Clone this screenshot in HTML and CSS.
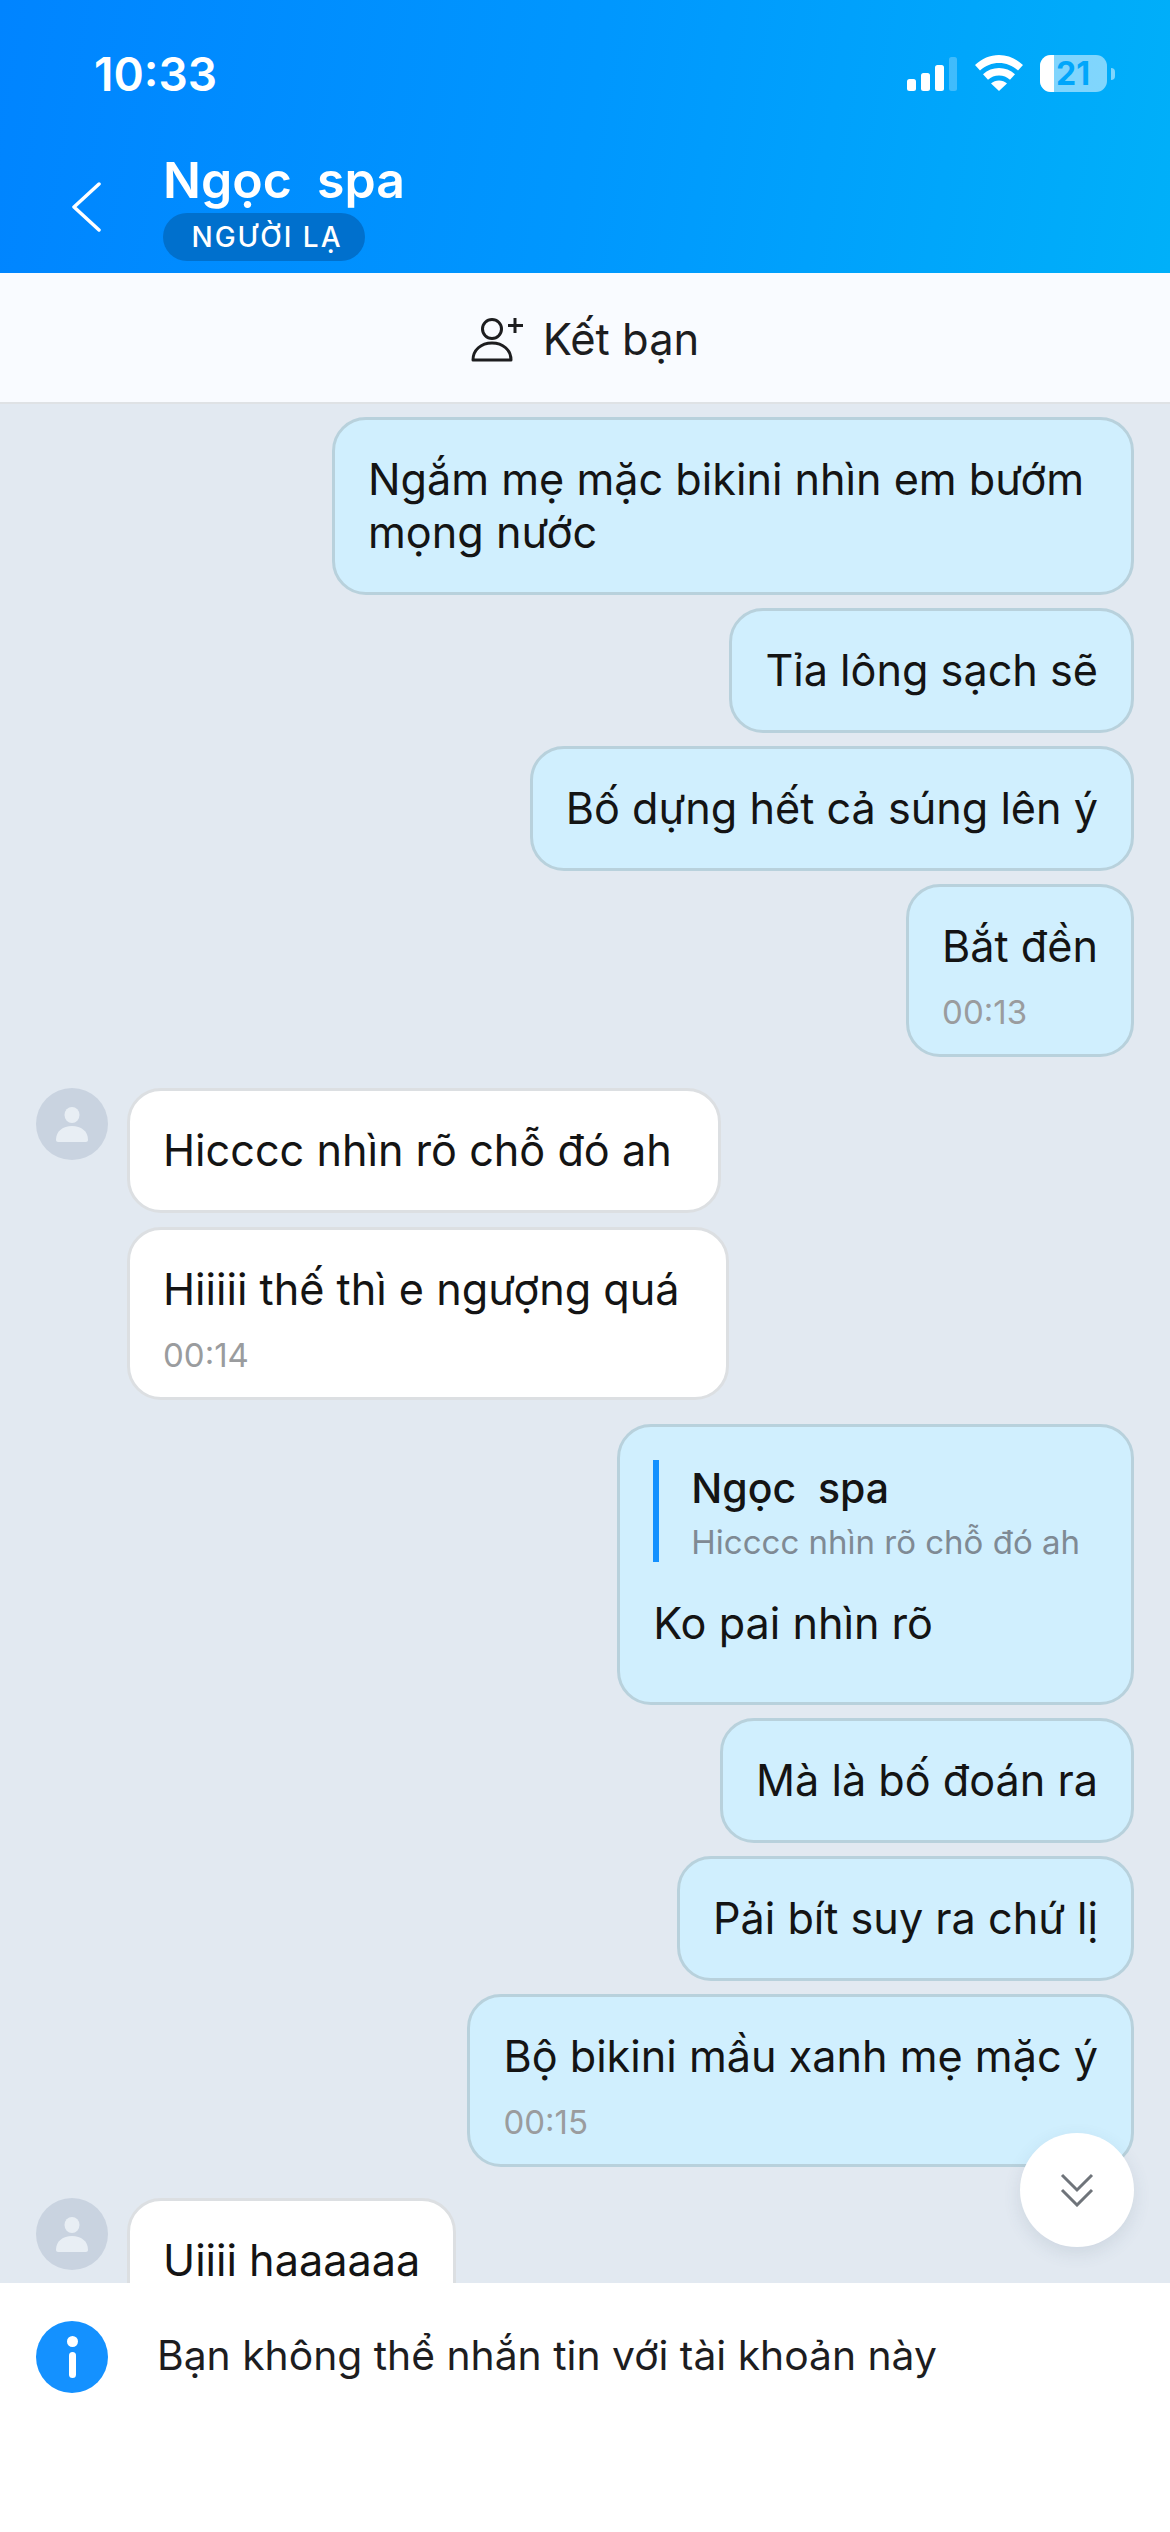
FILE: index.html
```html
<!DOCTYPE html>
<html lang="vi">
<head>
    <meta charset="UTF-8">
    <meta name="viewport" content="width=device-width, initial-scale=1.0">
    <title>Ngọc spa</title>
    <link rel="stylesheet" href="styles.css">
</head>
<body>
<div class="screen">
    <header class="header">
        <div class="status-bar">
            <span class="clock">10:33</span>
            <div class="status-icons">
                <svg class="signal" width="50" height="34" viewBox="0 0 50 34">
                    <rect x="0" y="22" width="9" height="12" rx="2.500" fill="#fff"/>
                    <rect x="14" y="16" width="9" height="18" rx="2.500" fill="#fff"/>
                    <rect x="28" y="8" width="9" height="26" rx="2.500" fill="#fff"/>
                    <rect x="42" y="0" width="8" height="34" rx="2.500" fill="#fff" fill-opacity=".25"/>
                </svg>
                <svg class="wifi" width="48" height="36" viewBox="0 0 48 36">
                    <path d="M24 0C15 0 7 3.500 0 10l5 5.500C10.500 10.500 17 8 24 8s13.500 2.500 19 7.500l5-5.500C41 3.500 33 0 24 0z" fill="#fff"/>
                    <path d="M24 13c-6 0-11.500 2.200-16 6.200l5 5.500c3-2.700 6.800-4.200 11-4.200s8 1.500 11 4.200l5-5.500C35.500 15.200 30 13 24 13z" fill="#fff"/>
                    <path d="M24 25.500c-3 0-5.800 1.100-8 3L24 36l8-7.500c-2.200-1.900-5-3-8-3z" fill="#fff"/>
                </svg>
                <div class="battery">
                    <div class="battery-body">
                        <div class="battery-level"></div>
                        <span class="battery-text">21</span>
                    </div>
                    <div class="battery-nub"></div>
                </div>
            </div>
        </div>
        <div class="nav-bar">
            <svg class="back" width="32" height="50" viewBox="0 0 32 50">
                <path d="M27 2L2 25l25 23" fill="none" stroke="#fff" stroke-width="3.500" stroke-linecap="round" stroke-linejoin="round"/>
            </svg>
            <div class="nav-title">
                <div class="contact-name">Ngọc&nbsp; spa</div>
                <div class="stranger-pill">NGƯỜI LẠ</div>
            </div>
        </div>
    </header>

    <div class="friend-bar">
        <svg width="54" height="46" viewBox="0 0 54 46">
            <circle cx="21" cy="13" r="9.500" fill="none" stroke="#1d1d1f" stroke-width="3"/>
            <path d="M2 44c0-10 8-17 19-17s19 7 19 17z" fill="none" stroke="#1d1d1f" stroke-width="3" stroke-linejoin="round"/>
            <path d="M44 2v15M37 9.500h15" fill="none" stroke="#1d1d1f" stroke-width="3"/>
        </svg>
        <span>Kết bạn</span>
    </div>

    <main class="chat">
        <div class="bubble sent">Ngắm mẹ mặc bikini nhìn em bướm mọng nước</div>
        <div class="bubble sent">Tỉa lông sạch sẽ</div>
        <div class="bubble sent">Bố dựng hết cả súng lên ý</div>
        <div class="bubble sent">
            Bắt đền
            <div class="time">00:13</div>
        </div>

        <div class="incoming group-start">
            <div class="avatar">
                <svg width="36" height="36" viewBox="0 0 36 36">
                    <ellipse cx="18" cy="9" rx="7.500" ry="8" fill="#e8eef4"/>
                    <path d="M2 34c0-9 7-14 16-14s16 5 16 14c0 1-1 2-2 2H4c-1 0-2-1-2-2z" fill="#e8eef4"/>
                </svg>
            </div>
            <div class="stack">
                <div class="bubble received roomy">Hicccc nhìn rõ chỗ đó ah</div>
                <div class="bubble received roomy">
                    Hiiiii thế thì e ngượng quá
                    <div class="time">00:14</div>
                </div>
            </div>
        </div>

        <div class="bubble sent reply group-start-small">
            <div class="quote">
                <div class="quote-name">Ngọc&nbsp; spa</div>
                <div class="quote-text">Hicccc nhìn rõ chỗ đó ah</div>
            </div>
            Ko pai nhìn rõ
        </div>
        <div class="bubble sent">Mà là bố đoán ra</div>
        <div class="bubble sent">Pải bít suy ra chứ lị</div>
        <div class="bubble sent">
            Bộ bikini mầu xanh mẹ mặc ý
            <div class="time">00:15</div>
        </div>

        <div class="incoming group-start">
            <div class="avatar">
                <svg width="36" height="36" viewBox="0 0 36 36">
                    <ellipse cx="18" cy="9" rx="7.500" ry="8" fill="#e8eef4"/>
                    <path d="M2 34c0-9 7-14 16-14s16 5 16 14c0 1-1 2-2 2H4c-1 0-2-1-2-2z" fill="#e8eef4"/>
                </svg>
            </div>
            <div class="stack">
                <div class="bubble received">Uiiii haaaaaa</div>
            </div>
        </div>

        <!-- floats over the messages -->
        <button class="scroll-down">
            <svg width="34" height="34" viewBox="0 0 34 34">
                <path d="M2 2l15 15L32 2M2 17l15 15 15-15" fill="none" stroke="#6f747a" stroke-width="3"/>
            </svg>
        </button>
    </main>

    <footer class="notice">
        <div class="info-icon">
            <span class="info-dot"></span>
            <span class="info-stem"></span>
        </div>
        <span class="notice-text">Bạn không thể nhắn tin với tài khoản này</span>
    </footer>
</div>
</body>
</html>
```

FILE: styles.css
```css
html, body {
    margin: 0;
    padding: 0;
}
body {
    font-family: Inter, "Noto Sans", sans-serif;
    color: #141414;
}
.screen {
    width: 1170px;
    height: 2532px;
    display: flex;
    flex-direction: column;
    overflow: hidden;
    background-color: #e2e9f1;
}

/* Top blue area */
.header {
    height: 273px;
    flex: none;
    background: linear-gradient(100deg, #0084ff 0%, #0097fe 50%, #00b0f9 100%);
    color: #fff;
}
.status-bar {
    height: 146px;
    display: flex;
    justify-content: space-between;
    align-items: flex-start;
    padding: 0 55px 0 94px;
}
.clock {
    font-size: 46px;
    font-weight: 600;
    line-height: 56px;
    margin-top: 46px;
}
.status-icons {
    display: flex;
    align-items: flex-start;
    margin-top: 55px;
}
.signal {
    margin: 2px 18px 0 0;
}
.battery {
    display: flex;
    align-items: center;
    margin-left: 17px;
}
.battery-body {
    width: 67px;
    height: 37px;
    border-radius: 11px;
    background-color: rgba(255, 255, 255, 0.5);
    display: flex;
}
.battery-level {
    width: 14px;
    border-radius: 11px 0 0 11px;
    background-color: #fff;
}
.battery-text {
    margin-left: 2px;
    font-size: 32px;
    font-weight: 700;
    line-height: 37px;
    color: #00a6fb;
}
.battery-nub {
    width: 4px;
    height: 12px;
    margin-left: 4px;
    border-radius: 0 6px 6px 0;
    background-color: rgba(255, 255, 255, 0.5);
}
.nav-bar {
    display: flex;
    align-items: flex-start;
    padding-left: 72px;
}
.back {
    margin: 36px 0 0 0;
}
.nav-title {
    margin-left: 59px;
}
.contact-name {
    font-size: 50px;
    font-weight: 600;
    line-height: 60px;
    margin-top: 4px;
    margin-bottom: 3px;
    white-space: nowrap;
}
.stranger-pill {
    width: 202px;
    height: 48px;
    box-sizing: border-box;
    padding-left: 6px;
    border-radius: 24px;
    background-color: #0070cd;
    font-size: 28px;
    font-weight: 500;
    line-height: 48px;
    letter-spacing: 2px;
    text-align: center;
}

/* Add friend bar */
.friend-bar {
    height: 131px;
    flex: none;
    box-sizing: border-box;
    display: flex;
    justify-content: center;
    align-items: center;
    gap: 18px;
    padding-top: 2px;
    background-color: #f9fbff;
    border-bottom: 2px solid #dfe2e5;
    font-size: 43.5px;
    color: #1d1d1f;
}

/* Messages */
.chat {
    position: relative;
    flex: 1;
    min-height: 0;
    overflow: hidden;
    display: flex;
    flex-direction: column;
    align-items: flex-end;
    gap: 13px;
    padding: 13px 36px 0 36px;
}
.bubble {
    box-sizing: border-box;
    max-width: 802px;
    padding: 33px;
    border-radius: 34px;
    border: 3px solid;
    font-size: 43.2px;
    line-height: 53px;
}
.sent {
    background-color: #d0effe;
    border-color: #b8d1dc;
}
.received {
    background-color: #fff;
    border-color: #dcdfe2;
}
.roomy {
    padding-right: 46px;
}
.time {
    margin-top: 22px;
    margin-bottom: -8px;
    font-size: 33px;
    line-height: 34px;
    color: #9a9c9e;
}
.incoming {
    align-self: flex-start;
    display: flex;
    align-items: flex-start;
    gap: 19px;
}
.group-start {
    margin-top: 18px;
}
.group-start-small {
    margin-top: 11px;
}
.stack {
    display: flex;
    flex-direction: column;
    align-items: flex-start;
    gap: 14px;
}
.avatar {
    width: 72px;
    height: 72px;
    flex: none;
    border-radius: 50%;
    background-color: #c9d3e0;
    display: flex;
    align-items: center;
    justify-content: center;
}

/* Quoted message inside a bubble */
.reply {
    padding-right: 51px;
    padding-bottom: 52px;
}
.quote {
    height: 102px;
    border-left: 6px solid #1491ff;
    padding-left: 32px;
    margin-bottom: 35px;
}
.quote-name {
    font-size: 41px;
    font-weight: 500;
    line-height: 56px;
}
.quote-text {
    margin-top: 4px;
    font-size: 33px;
    line-height: 44px;
    color: #7f8a94;
}
.scroll-down {
    position: absolute;
    right: 36px;
    top: 1729px;
    width: 114px;
    height: 114px;
    padding: 0;
    border: none;
    border-radius: 50%;
    background-color: #fff;
    box-shadow: 0 6px 18px rgba(60, 80, 110, 0.12);
    display: flex;
    align-items: center;
    justify-content: center;
}

/* Bottom notice */
.notice {
    height: 249px;
    flex: none;
    box-sizing: border-box;
    display: flex;
    align-items: flex-start;
    background-color: #fff;
    padding: 38px 36px 0 36px;
}
.info-icon {
    width: 72px;
    height: 72px;
    flex: none;
    border-radius: 50%;
    background-color: #1491ff;
    display: flex;
    flex-direction: column;
    align-items: center;
    padding-top: 15px;
    box-sizing: border-box;
}
.info-dot {
    width: 11px;
    height: 11px;
    border-radius: 50%;
    background-color: #fff;
}
.info-stem {
    width: 7px;
    height: 26px;
    margin-top: 5px;
    border-radius: 4px;
    background-color: #fff;
}
.notice-text {
    margin-left: 49px;
    margin-top: -2px;
    font-size: 40.8px;
    line-height: 72px;
    color: #1d1d1f;
}
```
